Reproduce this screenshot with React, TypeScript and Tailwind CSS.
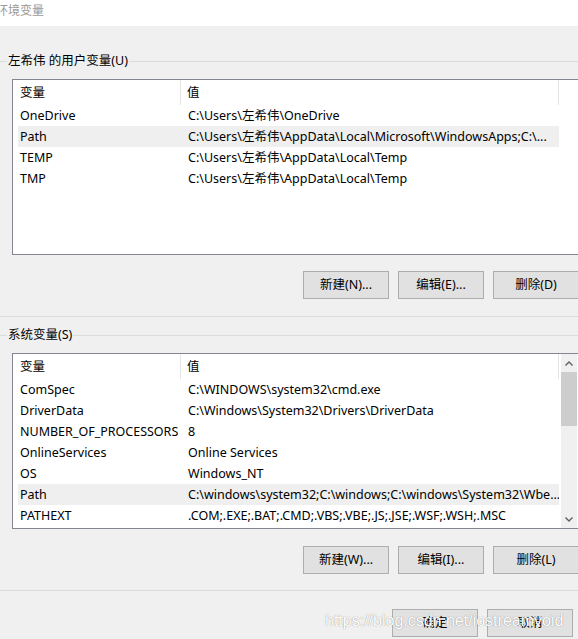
import React from 'react';

type Row = { name: string; value: string; selected?: boolean };

const userVars: Row[] = [
  { name: 'OneDrive', value: 'C:\\Users\\左希伟\\OneDrive' },
  { name: 'Path', value: 'C:\\Users\\左希伟\\AppData\\Local\\Microsoft\\WindowsApps;C:\\...', selected: true },
  { name: 'TEMP', value: 'C:\\Users\\左希伟\\AppData\\Local\\Temp' },
  { name: 'TMP', value: 'C:\\Users\\左希伟\\AppData\\Local\\Temp' },
];

const systemVars: Row[] = [
  { name: 'ComSpec', value: 'C:\\WINDOWS\\system32\\cmd.exe' },
  { name: 'DriverData', value: 'C:\\Windows\\System32\\Drivers\\DriverData' },
  { name: 'NUMBER_OF_PROCESSORS', value: '8' },
  { name: 'OnlineServices', value: 'Online Services' },
  { name: 'OS', value: 'Windows_NT' },
  { name: 'Path', value: 'C:\\windows\\system32;C:\\windows;C:\\windows\\System32\\Wbe...', selected: true },
  { name: 'PATHEXT', value: '.COM;.EXE;.BAT;.CMD;.VBS;.VBE;.JS;.JSE;.WSF;.WSH;.MSC' },
];

const font = { fontFamily: '"Noto Sans", "Noto Sans CJK SC", sans-serif' };

const GroupLabel: React.FC<{ label: string; className?: string }> = ({ label, className }) => (
  <div className={`flex items-center h-[16px] ${className ?? ''}`}>
    <div className="w-[7px] h-px bg-[#dcdcdc]" />
    <span className="px-px text-[12.5px] leading-[16px] text-black whitespace-nowrap">{label}</span>
    <div className="flex-1 h-px bg-[#dcdcdc]" />
  </div>
);

const VarList: React.FC<{ rows: Row[]; scroll?: boolean; className?: string }> = ({ rows, scroll, className }) => (
  <div className={`relative ml-[12px] w-[570px] h-[176px] bg-white border border-[#828790] ${className ?? ''}`}>
    <div className="flex h-[25px] pl-[5px] text-[12.5px] text-black">
      <div className="w-[163px] pl-[2px] pt-[2px] flex items-center border-r border-[#e5e5e5]">变量</div>
      <div className="w-[378px] pl-[6px] pt-[2px] flex items-center border-r border-[#e5e5e5]">值</div>
    </div>
    {rows.map(row => (
      <div
        key={row.name}
        className={`flex h-[21px] ml-[5px] w-[541px] pt-[2px] items-center text-[12.5px] text-black whitespace-nowrap ${
          row.selected ? 'bg-[#efefef]' : ''
        }`}
      >
        <div className="w-[163px] pl-[2px] overflow-hidden">{row.name}</div>
        <div className="flex-1 pl-[7px] overflow-hidden">{row.value}</div>
      </div>
    ))}
    {scroll && (
      <div className="absolute top-0 left-[548px] w-[16px] h-[174px] bg-[#f0f0f0] flex flex-col">
        <div className="h-[18px] flex items-center justify-center">
          <svg width="8" height="5" viewBox="0 0 8 5">
            <path d="M0.5 4.5 L4 1 L7.5 4.5" fill="none" stroke="#606060" strokeWidth="1.4" />
          </svg>
        </div>
        <div className="h-[54px] bg-[#cdcdcd]" />
        <div className="flex-1" />
        <div className="h-[18px] flex items-center justify-center">
          <svg width="8" height="5" viewBox="0 0 8 5">
            <path d="M0.5 0.5 L4 4 L7.5 0.5" fill="none" stroke="#606060" strokeWidth="1.4" />
          </svg>
        </div>
      </div>
    )}
  </div>
);

const Btn: React.FC<{ label: string }> = ({ label }) => (
  <button className="w-[86px] h-[28px] shrink-0 bg-[#e1e1e1] border border-[#adadad] text-[12.5px] text-black flex items-center justify-center">
    {label}
  </button>
);

export default function App() {
  return (
    <div className="relative w-[578px] h-[639px] overflow-hidden bg-[#f0f0f0]" style={font}>
      <div className="h-[26px] bg-white flex items-start">
        <span className="ml-[-4px] mt-[3px] text-[12px] leading-[16px] text-[#999999] whitespace-nowrap">环境变量</span>
      </div>

      <GroupLabel label="左希伟 的用户变量(U)" className="mt-[27px]" />
      <VarList rows={userVars} className="mt-[10px]" />
      <div className="flex ml-[303px] mt-[16px] gap-[9px]">
        <Btn label="新建(N)..." />
        <Btn label="编辑(E)..." />
        <Btn label="删除(D)" />
      </div>
      <div className="mt-[17px] h-px bg-[#dcdcdc]" />

      <GroupLabel label="系统变量(S)" className="mt-[10px]" />
      <VarList rows={systemVars} scroll className="mt-[10px]" />
      <div className="flex ml-[303px] mt-[17px] gap-[9px]">
        <Btn label="新建(W)..." />
        <Btn label="编辑(I)..." />
        <Btn label="删除(L)" />
      </div>
      <div className="mt-[16px] h-px bg-[#dcdcdc]" />

      <div className="flex ml-[392px] mt-[18px] gap-[9px]">
        <Btn label="确定" />
        <Btn label="取消" />
      </div>

      <div
        className="absolute left-[325px] top-[611px] text-[16px] leading-[20px] text-white whitespace-nowrap [text-shadow:0_0_1px_rgba(0,0,0,0.5)]"
        style={{ fontFamily: '"Liberation Sans", Arial, sans-serif' }}
      >
        https://blog.csdn.net/iostreamvoid
      </div>
    </div>
  );
}
